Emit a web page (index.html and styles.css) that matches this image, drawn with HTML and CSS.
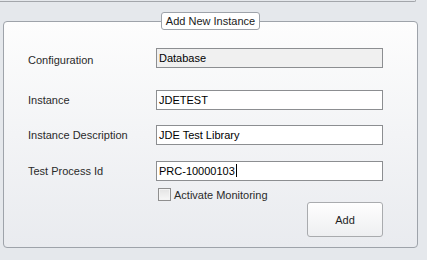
FILE: index.html
```html
<!DOCTYPE html>
<html lang="en">
<head>
  <meta charset="UTF-8" />
  <title>Add New Instance</title>
  <link rel="stylesheet" href="styles.css">
</head>
<body>
  <div class="top-panel"></div>

  <!-- Group box -->
  <div class="group">
    <div class="group-title">Add New Instance</div>

    <div class="row row-config">
      <span class="label">Configuration</span>
      <div class="field readonly">Database</div>
    </div>
    <div class="row row-instance">
      <span class="label">Instance</span>
      <div class="field">JDETEST</div>
    </div>
    <div class="row row-desc">
      <span class="label">Instance Description</span>
      <div class="field">JDE Test Library</div>
    </div>
    <div class="row row-process">
      <span class="label">Test Process Id</span>
      <div class="field">PRC-10000103<span class="caret"></span></div>
    </div>

    <label class="check"><span class="box"></span>Activate Monitoring</label>

    <div class="actions">
      <button class="btn">Add</button>
    </div>
  </div>
</body>
</html>
```

FILE: styles.css
```css
body {
  margin: 0;
  width: 427px;
  height: 260px;
  overflow: hidden;
  background: #e5e8ec;
  font-family: "Liberation Sans", Arial, sans-serif;
  font-size: 11px;
  color: #1e1e1e;
}

.top-panel {
  width: 415px;
  height: 1px;
  border-bottom: 1px solid #a3a6ab;
  border-right: 1px solid #a3a6ab;
  border-bottom-right-radius: 2px;
}

.group {
  position: relative;
  box-sizing: border-box;
  width: 415px;
  height: 227px;
  margin: 19px 0 0 3px;
  padding: 26px 0 0 24px;
  border: 1px solid #9ea3aa;
  border-radius: 4px;
  background: linear-gradient(#fdfdfd, #e9ebef);
}

.group-title {
  position: absolute;
  left: 157px;
  top: -10px;
  box-sizing: border-box;
  width: 99px;
  height: 18px;
  line-height: 16px;
  text-align: center;
  border: 1px solid #9ea3aa;
  border-radius: 3px;
  background: #fff;
  color: #1a1a1a;
}

.row {
  display: flex;
  align-items: center;
  height: 20px;
}

.row-instance { margin-top: 22px; }
.row-desc { margin-top: 15px; }
.row-process { margin-top: 16px; }

.label {
  width: 128px;
  color: #2a2a2a;
}

.row-config .label { padding-top: 4px; }

.field {
  box-sizing: border-box;
  width: 227px;
  height: 20px;
  padding-left: 2px;
  line-height: 18px;
  border: 1px solid #8c8e91;
  background: #fff;
  color: #000;
  white-space: nowrap;
}

.field.readonly { background: #f0f0f0; }

.caret {
  display: inline-block;
  width: 1px;
  height: 13px;
  margin-left: 1px;
  vertical-align: -2px;
  background: #000;
}

.check {
  display: flex;
  align-items: center;
  height: 13px;
  margin: 7px 0 0 130px;
  color: #2a2a2a;
}

.check .box {
  box-sizing: border-box;
  width: 13px;
  height: 13px;
  margin-right: 3px;
  border: 1px solid #8f8f8f;
  background: linear-gradient(#e4e4e4, #f7f7f7);
  box-shadow: inset 0 0 0 1px #f4f4f4;
}

.actions {
  margin: 1px 0 0 279px;
}

.btn {
  box-sizing: border-box;
  width: 76px;
  height: 35px;
  padding: 0;
  border: 1px solid #a9abae;
  border-radius: 3px;
  background: linear-gradient(#fefefe, #eeeff1);
  font-family: "Liberation Sans", Arial, sans-serif;
  font-size: 11px;
  color: #1e1e1e;
}
```
